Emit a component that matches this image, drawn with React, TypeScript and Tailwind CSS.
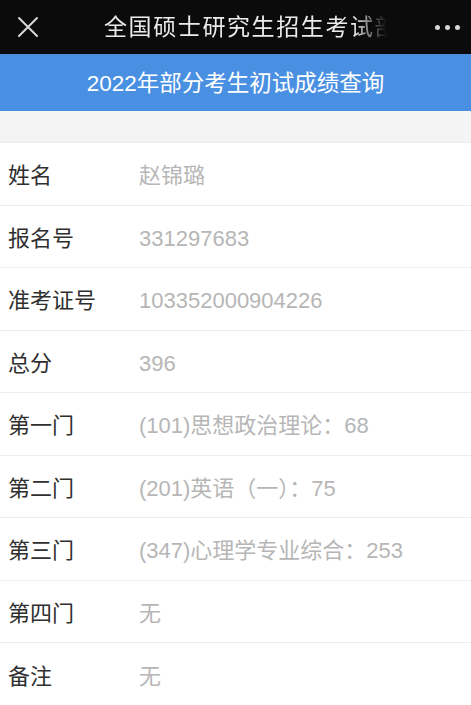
const rows: { label: string; value: string }[] = [
  { label: "姓名", value: "赵锦璐" },
  { label: "报名号", value: "331297683" },
  { label: "准考证号", value: "103352000904226" },
  { label: "总分", value: "396" },
  { label: "第一门", value: "(101)思想政治理论：68" },
  { label: "第二门", value: "(201)英语（一）：75" },
  { label: "第三门", value: "(347)心理学专业综合：253" },
  { label: "第四门", value: "无" },
  { label: "备注", value: "无" },
];

export default function App() {
  return (
    <div
      className="w-[471px] h-[705px] overflow-hidden bg-white"
      style={{ fontFamily: '"Liberation Sans", "Noto Sans CJK SC", sans-serif' }}
    >
      <div className="h-[54px] bg-[#0b0b0b] flex items-center relative">
        <svg
          className="absolute left-[17px] top-[16px]"
          width="22"
          height="22"
          viewBox="0 0 22 22"
          fill="none"
          stroke="#d8d8d8"
          strokeWidth="2"
          strokeLinecap="round"
        >
          <path d="M2 2 L20 20 M20 2 L2 20" />
        </svg>
        <div
          className="absolute left-[104px] top-0 h-[54px] w-[283px] overflow-hidden flex items-center"
          style={{
            WebkitMaskImage: "linear-gradient(to right, black 88%, transparent 100%)",
            maskImage: "linear-gradient(to right, black 88%, transparent 100%)",
          }}
        >
          <span className="whitespace-nowrap text-[23px] tracking-[1.6px] text-[#ebebeb]">
            全国硕士研究生招生考试部
          </span>
        </div>
        <div className="absolute right-[11px] top-[25px] flex gap-[5px]">
          <span className="w-[5px] h-[5px] rounded-full bg-[#d8d8d8]" />
          <span className="w-[5px] h-[5px] rounded-full bg-[#d8d8d8]" />
          <span className="w-[5px] h-[5px] rounded-full bg-[#d8d8d8]" />
        </div>
      </div>

      <div className="h-[57px] bg-[#4a90e2] flex items-center justify-center pt-[3px]">
        <span className="text-[22.5px] text-white">2022年部分考生初试成绩查询</span>
      </div>

      <div className="h-[32px] bg-[#f4f4f4] border-b border-[#ebebeb]" />

      <div>
        {rows.map((r) => (
          <div
            key={r.label}
            className="h-[62.5px] flex items-center pt-[4px] border-b border-[#ececec] last:border-b-0"
          >
            <span className="w-[139px] pl-[8px] text-[22px] text-[#2f2f2f] shrink-0">
              {r.label}
            </span>
            <span className="text-[22px] text-[#b6b6b6] whitespace-nowrap">{r.value}</span>
          </div>
        ))}
      </div>
    </div>
  );
}
